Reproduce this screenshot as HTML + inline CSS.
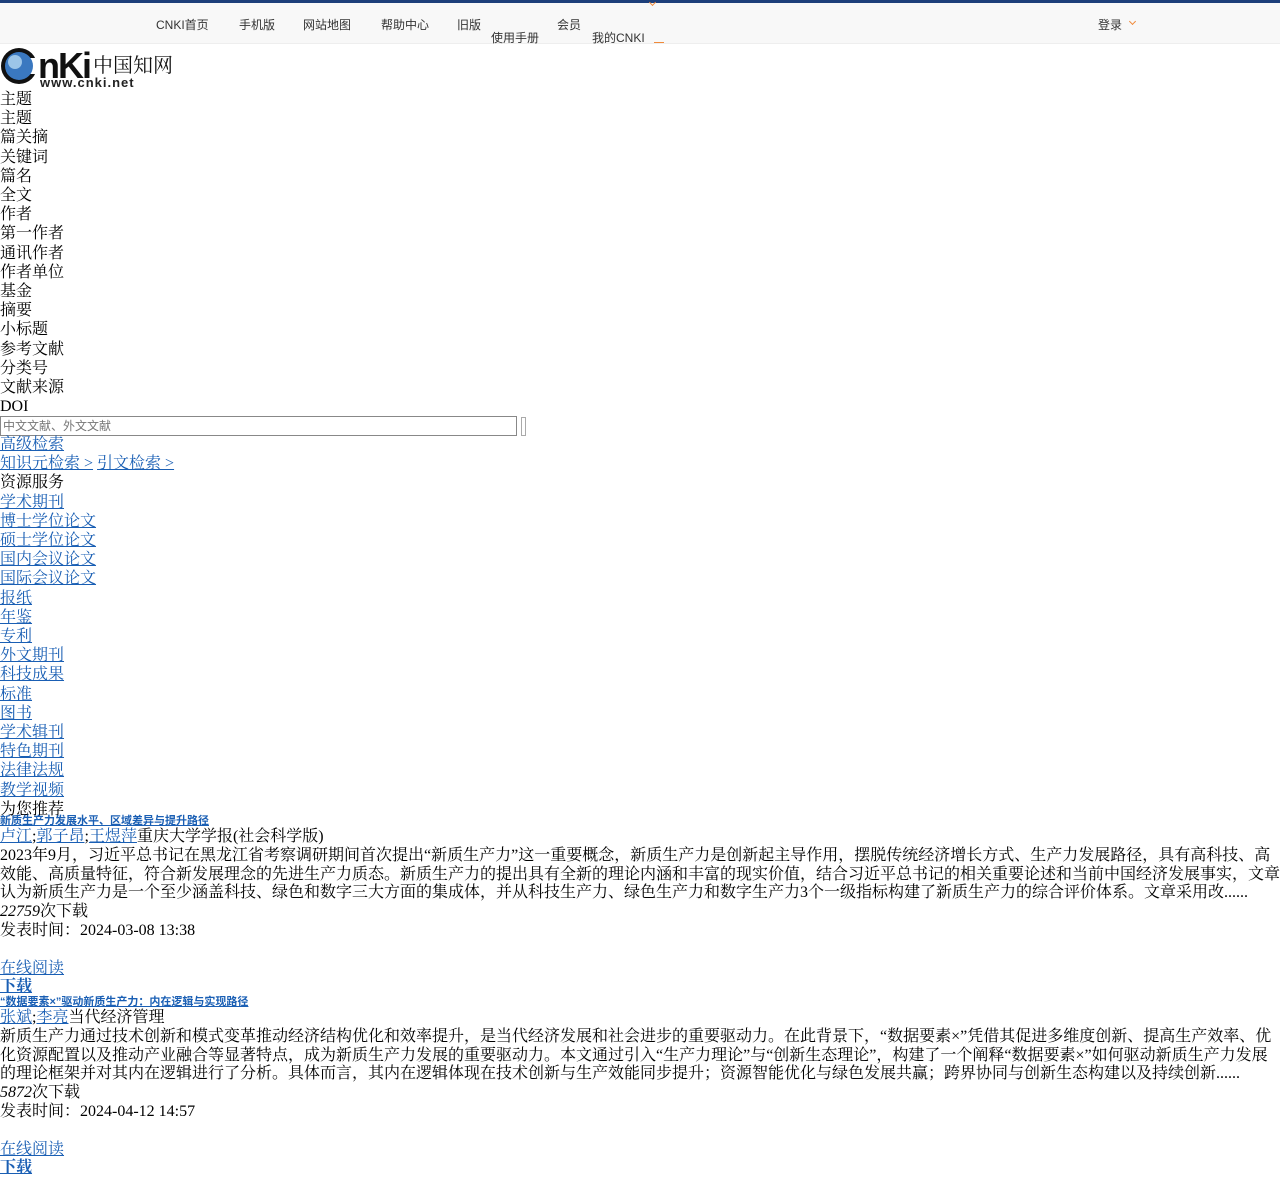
<!DOCTYPE html>
<html><head><meta charset="utf-8"><style>
body{margin:0;width:1280px;height:1167px;overflow:hidden;background:#fff;font-family:"Liberation Serif","Noto Serif CJK SC","Noto Sans CJK SC",serif;font-size:16px;color:#000;position:relative}
.top{position:absolute;left:0;top:0;width:1280px;height:44px;background:#f8f8f8;border-top:3px solid #1d3f7a;box-sizing:border-box;border-bottom:1px solid #eee}
.nav{position:absolute;font-family:"Liberation Sans","Noto Sans CJK SC",sans-serif;font-size:12px;color:#333;white-space:nowrap}
.g{position:absolute;left:0;white-space:nowrap;line-height:19.2px}
a{color:#1a5fb4;text-decoration:underline}
.art{position:absolute;left:0;white-space:nowrap;line-height:18.8px}
.t{font-size:11px;font-weight:bold;line-height:13px;display:block;font-family:"Liberation Sans","Noto Sans CJK SC",sans-serif}
i{font-style:italic}
</style></head><body>
<div class="top"></div>
<div style="position:absolute;left:650px;top:0;height:4px;border-bottom:1.5px solid #f08a3a;border-right:1.5px solid #f08a3a;transform:rotate(45deg);width:4px"></div>
<div class="nav" style="left:156px;top:16px">CNKI首页</div>
<div class="nav" style="left:239px;top:16px">手机版</div>
<div class="nav" style="left:303px;top:16px">网站地图</div>
<div class="nav" style="left:381px;top:16px">帮助中心</div>
<div class="nav" style="left:457px;top:16px">旧版</div>
<div class="nav" style="left:491px;top:29px">使用手册</div>
<div class="nav" style="left:557px;top:16px">会员</div>
<div class="nav" style="left:592px;top:29px">我的CNKI</div>
<div style="position:absolute;left:654px;top:42px;width:10px;height:1px;background:#f08a3a"></div>
<div class="nav" style="left:1098px;top:16px">登录</div>
<div style="position:absolute;left:1130px;top:19px;width:4px;height:4px;border-right:1.5px solid #f08a3a;border-bottom:1.5px solid #f08a3a;transform:rotate(45deg)"></div>
<svg style="position:absolute;left:0;top:44px" width="180" height="46">
<circle cx="19" cy="22" r="18" fill="#111"/><rect x="28" y="14" width="12" height="16" fill="#fff"/><circle cx="19" cy="22" r="14" fill="#3a78c0"/><circle cx="15" cy="18" r="7" fill="#9cc5e8"/>
<text x="38" y="34" font-family="Liberation Sans" font-weight="bold" font-size="36" fill="#111" letter-spacing="-2">nKi</text>
<text x="93" y="28" font-family="Noto Serif CJK SC,serif" font-size="20" fill="#111">中国知网</text>
<text x="40" y="43" font-family="Liberation Sans" font-weight="bold" font-size="13" fill="#222" letter-spacing="1">www.cnki.net</text>
</svg>
<div class="g" style="top:90px">主题<br>主题<br>篇关摘<br>关键词<br>篇名<br>全文<br>作者<br>第一作者<br>通讯作者<br>作者单位<br>基金<br>摘要<br>小标题<br>参考文献<br>分类号<br>文献来源<br>DOI</div>
<div style="position:absolute;left:0;top:416px;width:517px;height:20px;border:1px solid #888;box-sizing:border-box;font-family:'Liberation Sans','Noto Sans CJK SC',sans-serif;font-size:12px;color:#777;line-height:18px;padding-left:2px">中文文献、外文文献</div>
<div style="position:absolute;left:521px;top:417px;width:3px;height:17px;border:1px solid #aaa"></div>
<div class="g" style="top:435px"><a>高级检索</a><br><a>知识元检索 &gt;</a> <a>引文检索 &gt;</a><br>资源服务<br><a>学术期刊</a><br><a>博士学位论文</a><br><a>硕士学位论文</a><br><a>国内会议论文</a><br><a>国际会议论文</a><br><a>报纸</a><br><a>年鉴</a><br><a>专利</a><br><a>外文期刊</a><br><a>科技成果</a><br><a>标准</a><br><a>图书</a><br><a>学术辑刊</a><br><a>特色期刊</a><br><a>法律法规</a><br><a>教学视频</a><br>为您推荐</div>
<div class="art" style="top:815px"><a class="t">新质生产力发展水平、区域差异与提升路径</a><a>卢江</a>;<a>郭子昂</a>;<a>王煜萍</a>重庆大学学报(社会科学版)<br>2023年9月，习近平总书记在黑龙江省考察调研期间首次提出“新质生产力”这一重要概念，新质生产力是创新起主导作用，摆脱传统经济增长方式、生产力发展路径，具有高科技、高<br>效能、高质量特征，符合新发展理念的先进生产力质态。新质生产力的提出具有全新的理论内涵和丰富的现实价值，结合习近平总书记的相关重要论述和当前中国经济发展事实，文章<br>认为新质生产力是一个至少涵盖科技、绿色和数字三大方面的集成体，并从科技生产力、绿色生产力和数字生产力3个一级指标构建了新质生产力的综合评价体系。文章采用改......<br><i>22759</i>次下载<br>发表时间：2024-03-08 13:38<br><br><a>在线阅读</a><br><a style="font-weight:bold">下载</a></div>
<div class="art" style="top:996px"><a class="t">“数据要素×”驱动新质生产力：内在逻辑与实现路径</a><a>张斌</a>;<a>李亮</a>当代经济管理<br>新质生产力通过技术创新和模式变革推动经济结构优化和效率提升，是当代经济发展和社会进步的重要驱动力。在此背景下，“数据要素×”凭借其促进多维度创新、提高生产效率、优<br>化资源配置以及推动产业融合等显著特点，成为新质生产力发展的重要驱动力。本文通过引入“生产力理论”与“创新生态理论”，构建了一个阐释“数据要素×”如何驱动新质生产力发展<br>的理论框架并对其内在逻辑进行了分析。具体而言，其内在逻辑体现在技术创新与生产效能同步提升；资源智能优化与绿色发展共赢；跨界协同与创新生态构建以及持续创新......<br><i>5872</i>次下载<br>发表时间：2024-04-12 14:57<br><br><a>在线阅读</a><br><a style="font-weight:bold">下载</a></div>
</body></html>
